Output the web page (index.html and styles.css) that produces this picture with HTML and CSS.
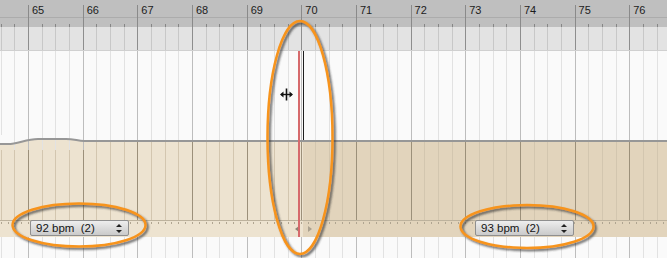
FILE: index.html
```html
<!DOCTYPE html>
<html>
<head>
    <link rel="stylesheet" href="styles.css">
</head>
<body>

    <div class="timeline">
        <div class="ruler">
            <div class="ruler-bars">
                <div class="rbar"></div>
                <div class="rbar"><span>65</span></div>
                <div class="rbar"><span>66</span></div>
                <div class="rbar"><span>67</span></div>
                <div class="rbar"><span>68</span></div>
                <div class="rbar"><span>69</span></div>
                <div class="rbar"><span>70</span></div>
                <div class="rbar"><span>71</span></div>
                <div class="rbar"><span>72</span></div>
                <div class="rbar"><span>73</span></div>
                <div class="rbar"><span>74</span></div>
                <div class="rbar"><span>75</span></div>
                <div class="rbar"><span>76</span></div>
            </div>
        </div>

        <div class="lane lane-gray"></div>
        <div class="lane lane-white lane-upper"></div>

        <div class="lane lane-tempo">
            <!-- tempo curve bump near the left edge -->
            <svg class="tempo-curve" width="90" height="15" viewBox="0 0 90 15">
                <path d="M0 0 H90 V6 L84 6 C78 6 74 4 66 4 L38 4 C26 4 18 9 8 9 L0 9 Z" fill="#fafafa"/>
                <path d="M0 15 H90 V6 L84 6 C78 6 74 4 66 4 L38 4 C26 4 18 9 8 9 L0 9 Z" fill="#ede3d0"/>
                <g stroke-width="1">
                    <line x1="14.5" y1="0" x2="14.5" y2="15" stroke="#e2e2e2"/>
                    <line x1="42.5" y1="0" x2="42.5" y2="15" stroke="#e2e2e2"/>
                    <line x1="55.5" y1="0" x2="55.5" y2="15" stroke="#e2e2e2"/>
                    <line x1="69.5" y1="0" x2="69.5" y2="15" stroke="#e2e2e2"/>
                    <line x1="28.5" y1="0" x2="28.5" y2="15" stroke="#bdbdbd"/>
                    <line x1="83.5" y1="0" x2="83.5" y2="15" stroke="#bdbdbd"/>
                </g>
                <path d="M0 9 L8 9 C18 9 26 4 38 4 L66 4 C74 4 78 6 84 6 L90 6" fill="none" stroke="#979797" stroke-width="2"/>
            </svg>
        </div>

        <div class="strip">
            <div class="tempo-select sel-left">92 bpm  (2)<span class="updown"></span></div>
            <div class="tempo-select sel-right">93 bpm  (2)<span class="updown"></span></div>
            <span class="marker marker-l"></span>
            <span class="marker marker-r"></span>
        </div>

        <div class="lane lane-white lane-lower"></div>

        <div class="playhead-red"></div>
        <div class="playhead-black"></div>

        <svg class="cursor" width="13" height="13" viewBox="0 0 13 13">
            <path d="M6.5 0.5 V12.5" stroke="#111" stroke-width="1.6"/>
            <path d="M1 6.5 H12" stroke="#111" stroke-width="1.4"/>
            <path d="M0 6.5 L3.5 3.5 V9.5 Z M13 6.5 L9.5 3.5 V9.5 Z" fill="#111"/>
        </svg>

        <svg class="marks" width="667" height="258" viewBox="0 0 667 258">
            <defs>
                <filter id="shade" x="-20%" y="-20%" width="140%" height="140%">
                    <feDropShadow dx="2" dy="2" stdDeviation="1.2" flood-color="#333" flood-opacity="0.75"/>
                </filter>
            </defs>
            <g fill="none" stroke="#f7941e" stroke-width="2.5" filter="url(#shade)">
                <ellipse cx="300" cy="137.5" rx="32.5" ry="116.5"/>
                <ellipse cx="79" cy="225" rx="66.5" ry="21.5"/>
                <ellipse cx="527" cy="226.5" rx="66.5" ry="21.5"/>
            </g>
        </svg>
    </div>

</body>
</html>
```

FILE: styles.css
```css
body { margin: 0; overflow: hidden; font-family: 'Liberation Sans', Arial, sans-serif; }

.timeline { position: relative; width: 667px; height: 258px; overflow: hidden; }

/* bars every 54.66px starting at x=28, beats every quarter of that */
.ruler {
    height: 27px; background-color: #bfbfbf;
    background-image:
        repeating-linear-gradient(90deg, #868686 0.67px 1.67px, transparent 1.67px 14.335px),
        linear-gradient(#acacac, #acacac);
    background-size: 100% 3px, 100% 1px;
    background-position: 0 24px, 0 17px;
    background-repeat: no-repeat;
}
.ruler-bars { display: flex; margin-left: -26.66px; padding-top: 5px; height: 22px; }
.rbar { flex: 0 0 54.66px; box-sizing: border-box; border-left: 1px solid #8a8a8a; }
.rbar span { display: block; padding-left: 3px; font-size: 11px; line-height: 11px; color: #1c1c1c; }

.lane {
    --fill: linear-gradient(transparent, transparent);
    background-image:
        repeating-linear-gradient(90deg, var(--bar) 28px 29px, transparent 29px 82.66px),
        repeating-linear-gradient(90deg, var(--beat) 0.67px 1.67px, transparent 1.67px 14.335px),
        var(--fill);
}
.lane-gray { height: 23px; background-color: #e3e3e3; border-bottom: 1px solid #d0d0d0; --bar: #8e8e8e; --beat: #c8c8c8; }
.lane-white { background-color: #fafafa; --bar: #bdbdbd; --beat: #e2e2e2; }
.lane-upper { height: 89px; }
.lane-lower { height: 21px; }

.lane-tempo {
    position: relative; height: 78px; border-top: 2px solid #979797;
    --bar: #9c907a; --beat: #d3c6af;
    --fill: linear-gradient(90deg, #ede3d0 303px, #e2d4bc 303px);
}
.tempo-curve { position: absolute; left: 0; top: -7px; }

.strip {
    position: relative; height: 16px; border-top: 1px solid #bdb29d;
    background-image:
        repeating-linear-gradient(90deg, #b0a591 0.67px 1.67px, transparent 1.67px 7.5px),
        linear-gradient(90deg, #ede3d0 303px, #e2d4bc 303px);
    background-size: 100% 2px, 100% 100%;
    background-position: 0 1px, 0 0;
    background-repeat: no-repeat;
}

.tempo-select {
    position: absolute; top: -1px; width: 99px; height: 16px; box-sizing: border-box;
    padding-left: 5px; font-size: 11.5px; line-height: 14px; color: #141414; white-space: pre;
    background: linear-gradient(#eeeeee, #cacaca); border: 1px solid #8f8f8f; border-radius: 2px;
}
.sel-left { left: 30px; }
.sel-right { left: 475px; }
.updown { position: absolute; right: 5px; top: 3px; width: 7px; height: 9px; }
.updown::before, .updown::after { content: ""; position: absolute; left: 0; border-left: 3.5px solid transparent; border-right: 3.5px solid transparent; }
.updown::before { top: 0; border-bottom: 3.5px solid #222; }
.updown::after { bottom: 0; border-top: 3.5px solid #222; }

.marker { position: absolute; top: 5px; width: 0; height: 0; border-top: 3px solid transparent; border-bottom: 3px solid transparent; }
.marker-l { left: 295px; border-right: 4px solid #8d8474; }
.marker-r { left: 308px; border-left: 4px solid #aaa08f; }

.playhead-red { position: absolute; left: 298px; top: 51px; width: 2px; height: 186px; background: #d66a6c; }
.playhead-black { position: absolute; left: 303px; top: 51px; width: 1px; height: 89px; background: #1e1e1e; }

.cursor { position: absolute; left: 280px; top: 88px; }
.marks { position: absolute; left: 0; top: 0; pointer-events: none; }
```
